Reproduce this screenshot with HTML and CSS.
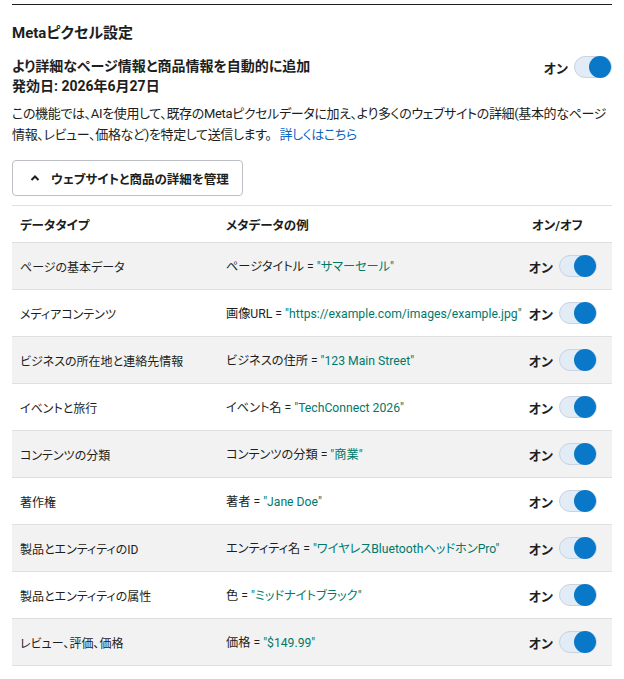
FILE: index.html
```html
<!DOCTYPE html>
<html lang="ja">
<head>
    <meta charset="UTF-8">
    <meta name="viewport" content="width=device-width, initial-scale=1.0">
    <title>Metaピクセル設定</title>
    <link rel="stylesheet" href="styles.css">
</head>
<body>
    <div class="panel">
        <h2>Metaピクセル設定</h2>
        <div class="feature">
            <div class="feature-title">
                <div>より詳細なページ情報と商品情報を自動的に追加</div>
                <div>発効日: 2026年6月27日</div>
            </div>
            <div class="switch-box">
                <span class="switch-label">オン</span>
                <span class="switch"><span class="knob"></span></span>
            </div>
        </div>
        <p class="desc">この機能では、AIを使用して、既存のMetaピクセルデータに加え、より多くのウェブサイトの詳細(基本的なページ情報、レビュー、価格など)を特定して送信します。<a href="#">詳しくはこちら</a></p>
        <button class="toggle-btn">
            <svg width="12" height="12" viewBox="0 0 12 12"><path d="M2.5 8 L6 4.5 L9.5 8" fill="none" stroke="#1c1e21" stroke-width="2"/></svg>
            ウェブサイトと商品の詳細を管理
        </button>
        <table>
            <thead>
                <tr>
                    <th class="c1">データタイプ</th>
                    <th class="c2">メタデータの例</th>
                    <th class="c3">オン/オフ</th>
                </tr>
            </thead>
            <tbody id="rows"></tbody>
        </table>
    </div>

    <script>
        const rows = [
            ['ページの基本データ', 'ページタイトル', 'サマーセール'],
            ['メディアコンテンツ', '画像URL', 'https://example.com/images/example.jpg'],
            ['ビジネスの所在地と連絡先情報', 'ビジネスの住所', '123 Main Street'],
            ['イベントと旅行', 'イベント名', 'TechConnect 2026'],
            ['コンテンツの分類', 'コンテンツの分類', '商業'],
            ['著作権', '著者', 'Jane Doe'],
            ['製品とエンティティのID', 'エンティティ名', 'ワイヤレスBluetoothヘッドホンPro'],
            ['製品とエンティティの属性', '色', 'ミッドナイトブラック'],
            ['レビュー、評価、価格', '価格', '$149.99']
        ];

        let html = '';
        rows.forEach(r => {
            html += `
                <tr>
                    <td class="c1">${r[0]}</td>
                    <td class="c2">${r[1]} = <span class="val">"${r[2]}"</span></td>
                    <td class="c3">
                        <div class="switch-box">
                            <span class="switch-label">オン</span>
                            <span class="switch"><span class="knob"></span></span>
                        </div>
                    </td>
                </tr>
            `;
        });
        document.getElementById('rows').innerHTML = html;
    </script>
</body>
</html>
```

FILE: styles.css
```css
body {
    font-family: Roboto, "Noto Sans CJK JP", sans-serif;
    font-feature-settings: "palt";
    color: #1c1e21;
    background: #fff;
    margin: 0;
    padding: 4px 12px 0 12px;
}
.panel {
    border-top: 1px solid #1c1e21;
}
h2 {
    font-size: 15px;
    font-weight: bold;
    margin: 18px 0 0 0;
    line-height: 20px;
}
.feature {
    display: flex;
    justify-content: space-between;
    align-items: flex-start;
    margin-top: 13px;
}
.feature-title {
    font-size: 14px;
    font-weight: bold;
    line-height: 20px;
}
.switch-box {
    display: flex;
    align-items: center;
    gap: 6px;
}
.switch-label {
    font-size: 13px;
    font-weight: bold;
    white-space: nowrap;
}
.switch {
    position: relative;
    display: inline-block;
    flex-shrink: 0;
    width: 36px;
    height: 20px;
    background: #e2ecf7;
    border: 1px solid #c9d4e0;
    border-radius: 11px;
}
.knob {
    position: absolute;
    right: 0;
    top: -1px;
    width: 22px;
    height: 22px;
    border-radius: 50%;
    background: #0a78c8;
}
.desc {
    font-size: 13px;
    line-height: 21px;
    letter-spacing: -0.35px;
    margin: 7px 0 0 0;
}
.desc a {
    color: #0a66c2;
    text-decoration: none;
    margin-left: 8px;
}
.toggle-btn {
    display: flex;
    align-items: center;
    gap: 10px;
    margin-top: 15px;
    height: 36px;
    padding: 0 13px 0 16px;
    background: #fff;
    border: 1px solid #bcc0c4;
    border-radius: 4px;
    font-family: inherit;
    font-feature-settings: "palt";
    font-size: 12.5px;
    font-weight: bold;
    color: #1c1e21;
}
table {
    width: 100%;
    table-layout: fixed;
    border-collapse: collapse;
    margin-top: 9px;
    border-top: 1px solid #dddfe2;
}
th, td {
    text-align: left;
    border-bottom: 1px solid #dddfe2;
    padding: 0 8px;
    height: 46px;
    font-size: 12px;
}
th {
    height: 36px;
    font-size: 12.5px;
    font-weight: bold;
}
tbody tr:nth-child(odd) {
    background: #f2f2f2;
}
.c1 {
    width: 190px;
}
td.c2 {
    font-size: 12.2px;
    white-space: nowrap;
}
.c3 {
    width: 72px;
}
td.c3 {
    padding: 0 15px 0 0;
}
.c3 .switch-box {
    justify-content: flex-end;
}
.val {
    color: #00796b;
}
```
